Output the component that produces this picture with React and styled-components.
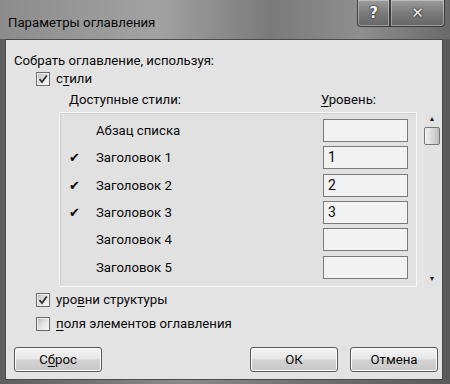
import React from 'react';
import styled, {createGlobalStyle} from 'styled-components';

const Global = createGlobalStyle`
  html, body {
    margin: 0;
    padding: 0;
    background: #fff;
  }
  body {
    font-family: Roboto, "Open Sans", sans-serif;
    color: #0a0a0a;
  }
`;

const Window = styled.div`
  width: 450px;
  height: 384px;
  box-sizing: border-box;
  display: flex;
  flex-direction: column;
  padding: 0 7px 4px 5px;
  background: linear-gradient(90deg, #5e5e5e 0%, #8a8a8a 40%, #707070 70%, #5a5a5a 100%);
`;

const TitleBar = styled.div`
  height: 39px;
  display: flex;
  align-items: flex-start;
  justify-content: space-between;
  margin: 0 -7px 0 -5px;
  padding-left: 8px;
  background: linear-gradient(90deg, #8c8c8c 0%, #a2a2a2 35%, #7a7a7a 60%, #8e8e8e 80%, #6a6a6a 100%);
  box-sizing: border-box;
`;

const Title = styled.div`
  margin-top: 15px;
  font-size: 13.2px;
  color: #0a0a0a;
`;

const Controls = styled.div`
  display: flex;
  margin-right: 5px;
`;

const CtlButton = styled.div`
  width: ${p => p.w}px;
  height: 27px;
  box-sizing: border-box;
  display: flex;
  align-items: center;
  justify-content: center;
  font-family: "DejaVu Sans", sans-serif;
  font-weight: bold;
  font-size: 15px;
  color: #f4f4f4;
  text-shadow: 0 0 2px #222, 0 0 1px #000;
  border: 1px solid #3c3c3c;
  border-top: none;
  border-radius: ${p => p.r};
  background: linear-gradient(180deg, #9c9c9c 0%, #7a7a7a 50%, #666 100%);
  box-shadow: inset 0 0 0 1px rgba(255,255,255,0.35);
`;

const Body = styled.div`
  flex: 1;
  background: #e3e3e3;
  border: 1px solid #4a4a4a;
  display: flex;
  flex-direction: column;
  padding: 11px 0 0 8px;
  font-size: 13.2px;
`;

const Label = styled.div`
  height: 19px;
  line-height: 19px;
`;

const CheckRow = styled.label`
  display: flex;
  align-items: center;
  gap: 6px;
  height: 15px;
  margin-left: 22px;
  margin-top: ${p => p.mt || 0}px;
`;

const Box = styled.span`
  width: 12px;
  height: 12px;
  border: 1px solid #6c6c6c;
  background: linear-gradient(135deg, #bdbdbd 0%, #e8e8e8 60%, #f5f5f5 100%);
  box-shadow: inset 0 0 0 1px #f0f0f0;
  display: flex;
  align-items: center;
  justify-content: center;
`;

const U = styled.span`
  text-decoration: underline;
  text-underline-offset: 2px;
`;

const Headers = styled.div`
  display: grid;
  grid-template-columns: 252px auto;
  margin: 5px 0 0 55px;
  height: 17px;
  line-height: 17px;
`;

const ListArea = styled.div`
  display: flex;
  margin: 4px 0 0 45px;
  gap: 5px;
`;

const ListBox = styled.div`
  width: 358px;
  height: 175px;
  border: 1px solid #f6f6f6;
  box-shadow: inset 1px 1px 0 #cfcfcf;
  background: #e1e1e1;
  padding-top: 6px;
  box-sizing: border-box;
  display: flex;
  flex-direction: column;
  gap: 4px;
`;

const Row = styled.div`
  display: grid;
  grid-template-columns: 36px 227px 85px;
  align-items: center;
  height: 23.3px;
`;

const Tick = styled.span`
  justify-self: end;
  margin-right: 16px;
  font-size: 13px;
  font-family: "DejaVu Sans", sans-serif;
  font-weight: bold;
`;

const LevelBox = styled.div`
  height: 23px;
  box-sizing: border-box;
  border: 1px solid #7a7a7a;
  background: #f2f2f2;
  padding-left: 4px;
  line-height: 21px;
  font-size: 14px;
`;

const ScrollBar = styled.div`
  width: 19px;
  height: 176px;
  display: flex;
  flex-direction: column;
  align-items: center;
  background: #e2e2e2;
  border-left: 1px solid #ededed;
  box-sizing: border-box;
  padding: 3px 0 4px;
`;

const Arrow = styled.span`
  font-size: 7px;
  line-height: 9px;
  color: #222;
`;

const Thumb = styled.div`
  width: 16px;
  height: 18px;
  margin-top: 3px;
  box-sizing: border-box;
  border: 1px solid #777;
  border-radius: 2px;
  background: linear-gradient(90deg, #f0f0f0 0%, #d6d6d6 60%, #bcbcbc 100%);
`;

const Spacer = styled.div`
  flex: 1;
`;

const Buttons = styled.div`
  display: flex;
  align-items: center;
  margin: 0 4px 7px 0;
`;

const Btn = styled.div`
  width: ${p => p.w}px;
  height: 25px;
  box-sizing: border-box;
  margin-right: ${p => p.mr || 0}px;
  border: 1px solid #5a5a5a;
  border-radius: 3px;
  display: flex;
  align-items: center;
  justify-content: center;
  background: linear-gradient(180deg, #f4f4f4 0%, #e6e6e6 48%, #d2d2d2 52%, #c8c8c8 100%);
  box-shadow: inset 0 0 0 1px #fafafa;
  font-size: 13.2px;
`;

const rows = [
  {name: 'Абзац списка', level: ''},
  {name: 'Заголовок 1', level: '1', on: true},
  {name: 'Заголовок 2', level: '2', on: true},
  {name: 'Заголовок 3', level: '3', on: true},
  {name: 'Заголовок 4', level: ''},
  {name: 'Заголовок 5', level: ''},
];

const Check = () => (
  <svg width="10" height="10" viewBox="0 0 10 10">
    <path d="M1.5 5.2 L4 8 L8.8 1.5" fill="none" stroke="#333" strokeWidth="1.8"/>
  </svg>
);

export default function App() {
  return (
    <>
      <Global/>
      <Window>
        <TitleBar>
          <Title>Параметры оглавления</Title>
          <Controls>
            <CtlButton w={33} r="0 0 0 4px">?</CtlButton>
            <CtlButton w={55} r="0 0 4px 0">✕</CtlButton>
          </Controls>
        </TitleBar>
        <Body>
          <Label>Собрать оглавление, используя:</Label>
          <CheckRow mt={1}>
            <Box><Check/></Box>
            <span>с<U>т</U>или</span>
          </CheckRow>
          <Headers>
            <span>Доступные стили:</span>
            <span><U>У</U>ровень:</span>
          </Headers>
          <ListArea>
            <ListBox>
              {rows.map(r => (
                <Row key={r.name}>
                  <Tick>{r.on ? '✔' : ''}</Tick>
                  <span>{r.name}</span>
                  <LevelBox>{r.level}</LevelBox>
                </Row>
              ))}
            </ListBox>
            <ScrollBar>
              <Arrow>▲</Arrow>
              <Thumb/>
              <Spacer/>
              <Arrow>▼</Arrow>
            </ScrollBar>
          </ListArea>
          <CheckRow mt={4}>
            <Box><Check/></Box>
            <span>уро<U>в</U>ни структуры</span>
          </CheckRow>
          <CheckRow mt={9}>
            <Box/>
            <span><U>п</U>оля элементов оглавления</span>
          </CheckRow>
          <Spacer/>
          <Buttons>
            <Btn w={88} mr={148}>С<U>б</U>рос</Btn>
            <Btn w={88} mr={12}>ОК</Btn>
            <Btn w={88}>Отмена</Btn>
          </Buttons>
        </Body>
      </Window>
    </>
  );
}
